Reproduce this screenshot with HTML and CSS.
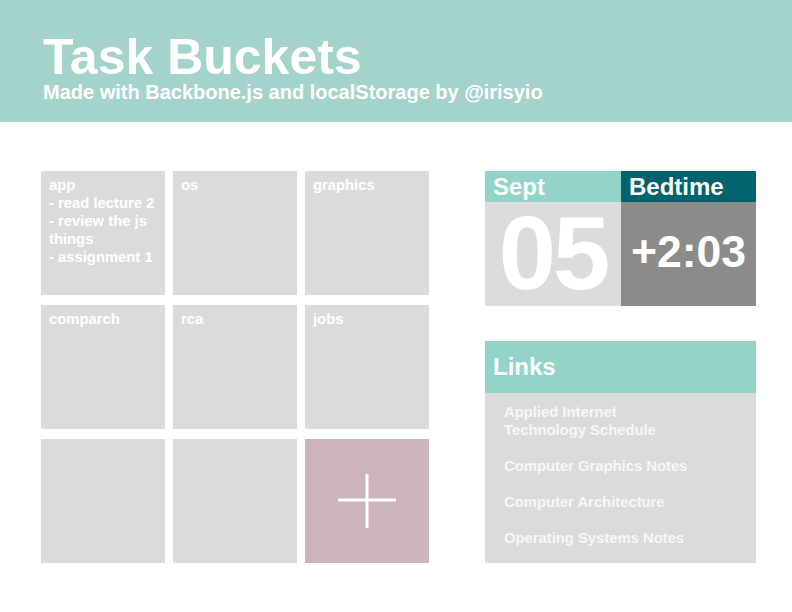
FILE: index.html
```html
<!DOCTYPE html>
<html>
<head>
<meta charset="utf-8">
<title>Task Buckets</title>
<link rel="stylesheet" href="styles.css">
</head>
<body>
<header class="masthead">
  <h1 class="title">Task Buckets</h1>
  <p class="subtitle">Made with Backbone.js and localStorage by @irisyio</p>
</header>
<main class="content">
  <section class="buckets">
    <div class="bucket">app<br>- read lecture 2<br>- review the js things<br>- assignment 1</div>
    <div class="bucket">os</div>
    <div class="bucket">graphics</div>
    <div class="bucket">comparch</div>
    <div class="bucket">rca</div>
    <div class="bucket">jobs</div>
    <div class="bucket"></div>
    <div class="bucket"></div>
    <div class="bucket bucket-add">
      <svg class="plus" width="58" height="54" viewBox="0 0 58 54"><path d="M29 0V54M0 26H58" stroke="#fff" stroke-width="3" fill="none"/></svg>
    </div>
  </section>
  <aside class="sidebar">
    <div class="clock">
      <div class="clock-col">
        <div class="clock-head head-date">Sept</div>
        <div class="clock-body body-date">05</div>
      </div>
      <div class="clock-col">
        <div class="clock-head head-bed">Bedtime</div>
        <div class="clock-body body-bed">+2:03</div>
      </div>
    </div>
    <div class="links">
      <div class="links-head">Links</div>
      <ul class="links-list">
        <li>Applied Internet<br>Technology Schedule</li>
        <li>Computer Graphics Notes</li>
        <li>Computer Architecture</li>
        <li>Operating Systems Notes</li>
      </ul>
    </div>
  </aside>
</main>
</body>
</html>
```
FILE: styles.css
```css
* { box-sizing: border-box; }
body {
  margin: 0;
  background: #ffffff;
  font-family: "Liberation Sans", Arial, Helvetica, sans-serif;
  font-weight: bold;
  color: #ffffff;
}
.masthead {
  background: #a4d3cc;
  height: 122px;
  padding: 33px 0 0 43px;
}
.title {
  margin: 0;
  font-size: 50px;
  line-height: 49px;
  font-weight: bold;
}
.subtitle {
  margin: 0;
  font-size: 20px;
  line-height: 20px;
}
.content {
  display: flex;
  padding: 49px 0 0 41px;
  gap: 56px;
}
.buckets {
  display: grid;
  grid-template-columns: repeat(3, 124px);
  grid-auto-rows: 124px;
  column-gap: 8px;
  row-gap: 10px;
}
.bucket {
  background: #dcdbdc;
  padding: 5px 8px;
  font-size: 14.8px;
  line-height: 18px;
}
.bucket-add {
  background: #cdb3bd;
  display: flex;
  align-items: center;
  justify-content: center;
}
.sidebar {
  width: 271px;
  display: flex;
  flex-direction: column;
  gap: 35px;
}
.clock {
  display: flex;
}
.clock-col {
  width: 136px;
}
.clock-col + .clock-col { width: 135px; }
.clock-head {
  height: 31px;
  padding-left: 8px;
  font-size: 24px;
  line-height: 31px;
}
.head-date { background: #93d3c8; }
.head-bed { background: #02636f; }
.clock-body {
  height: 104px;
  display: flex;
  align-items: center;
  justify-content: center;
}
.body-date {
  background: #dddcdd;
  font-size: 103px;
  line-height: 80px;
  letter-spacing: -3px;
}
.body-bed {
  background: #8c8b8b;
  font-size: 44.5px;
  line-height: 44px;
  padding-bottom: 4px;
}
.links {
  background: #dcdbdc;
  height: 222px;
}
.links-head {
  background: #93d3c8;
  height: 52px;
  padding-left: 8px;
  font-size: 24px;
  line-height: 52px;
}
.links-list {
  list-style: none;
  margin: 0;
  padding: 10px 0 0 19px;
  font-size: 14.8px;
  line-height: 18px;
  color: #f7f7f7;
}
.links-list li { margin-bottom: 18px; }
```
